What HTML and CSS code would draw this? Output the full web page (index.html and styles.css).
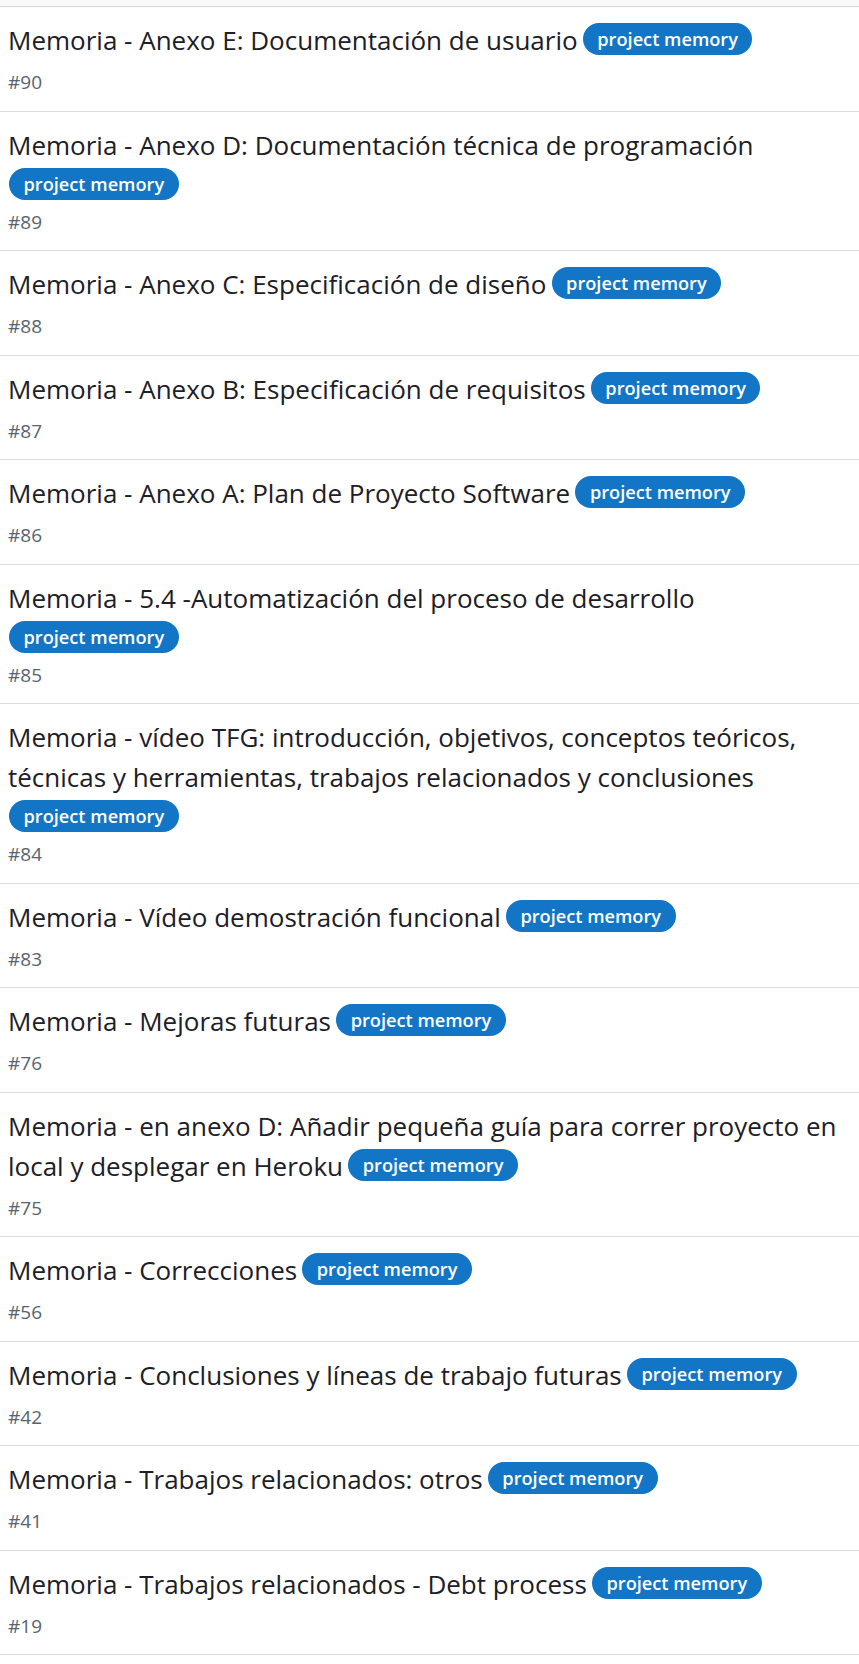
FILE: index.html
```html
<!DOCTYPE html>
<html lang="es">
<head>
<meta charset="utf-8">
<title>Issues</title>
<link rel="stylesheet" href="styles.css">
</head>
<body>
<div class="topbar"></div>
<ul class="issues">
  <li class="issue"><div class="title"><span class="title-text">Memoria - Anexo E: Documentación de usuario</span> <span class="label">project memory</span></div><div class="num">#90</div></li>
  <li class="issue"><div class="title"><span class="title-text">Memoria - Anexo D: Documentación técnica de programación</span> <span class="label">project memory</span></div><div class="num">#89</div></li>
  <li class="issue"><div class="title"><span class="title-text">Memoria - Anexo C: Especificación de diseño</span> <span class="label">project memory</span></div><div class="num">#88</div></li>
  <li class="issue"><div class="title"><span class="title-text">Memoria - Anexo B: Especificación de requisitos</span> <span class="label">project memory</span></div><div class="num">#87</div></li>
  <li class="issue"><div class="title"><span class="title-text">Memoria - Anexo A: Plan de Proyecto Software</span> <span class="label">project memory</span></div><div class="num">#86</div></li>
  <li class="issue"><div class="title"><span class="title-text">Memoria - 5.4 -Automatización del proceso de desarrollo</span> <span class="label">project memory</span></div><div class="num">#85</div></li>
  <li class="issue"><div class="title"><span class="title-text">Memoria - vídeo TFG: introducción, objetivos, conceptos teóricos, técnicas y herramientas, trabajos relacionados y conclusiones</span> <span class="label">project memory</span></div><div class="num">#84</div></li>
  <li class="issue"><div class="title"><span class="title-text">Memoria - Vídeo demostración funcional</span> <span class="label">project memory</span></div><div class="num">#83</div></li>
  <li class="issue"><div class="title"><span class="title-text">Memoria - Mejoras futuras</span> <span class="label">project memory</span></div><div class="num">#76</div></li>
  <li class="issue"><div class="title"><span class="title-text">Memoria - en anexo D: Añadir pequeña guía para correr proyecto en local y desplegar en Heroku</span> <span class="label">project memory</span></div><div class="num">#75</div></li>
  <li class="issue"><div class="title"><span class="title-text">Memoria - Correcciones</span> <span class="label">project memory</span></div><div class="num">#56</div></li>
  <li class="issue"><div class="title"><span class="title-text">Memoria - Conclusiones y líneas de trabajo futuras</span> <span class="label">project memory</span></div><div class="num">#42</div></li>
  <li class="issue"><div class="title"><span class="title-text">Memoria - Trabajos relacionados: otros</span> <span class="label">project memory</span></div><div class="num">#41</div></li>
  <li class="issue"><div class="title"><span class="title-text">Memoria - Trabajos relacionados - Debt process</span> <span class="label">project memory</span></div><div class="num">#19</div></li>
</ul>
</body>
</html>
```
FILE: styles.css
```css
html, body {
  margin: 0;
  padding: 0;
  background: #ffffff;
}
body {
  font-family: "Open Sans", "Noto Sans", "DejaVu Sans", sans-serif;
  color: #1f2328;
}
.topbar {
  height: 6px;
  background: #f6f8fa;
  border-bottom: 1px solid #d1d9e0;
}
.issues {
  list-style: none;
  margin: 0;
  padding: 0;
}
.issue {
  padding: 13px 8px 14.5px 8px;
  border-bottom: 1px solid #d8dee4;
}
.title {
  font-size: 16px;
  line-height: 24px;
}
.title-text {
  font-size: 26px;
  line-height: 40px;
  color: #1c2026;
}
.label {
  display: inline-block;
  vertical-align: top;
  margin-top: 3px;
  margin-left: 1px;
  height: 32px;
  line-height: 32px;
  padding: 0 14.5px;
  border-radius: 16px;
  background: #1275c5;
  color: #ffffff;
  font-size: 18.2px;
  font-weight: 600;
}
.num {
  margin-top: 8px;
  font-size: 19px;
  line-height: 28px;
  color: #59636e;
}
```
